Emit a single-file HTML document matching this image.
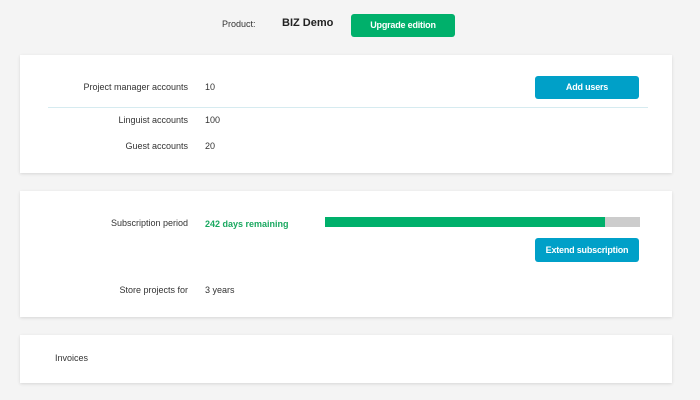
<!DOCTYPE html>
<html><head><style>
body{margin:0;width:700px;height:400px;background:#f4f4f4;font-family:"Liberation Sans",sans-serif;font-size:9px;color:#333;position:relative;overflow:hidden}
.a{position:absolute;white-space:nowrap}
.card{position:absolute;left:20px;width:652px;background:#fff;box-shadow:0 1px 3px rgba(0,0,0,.12)}
.btn{position:absolute;border-radius:3px;color:#fff;text-align:center;font-size:9px;font-weight:bold;letter-spacing:-0.2px}
.lbl{position:absolute;right:512px;white-space:nowrap;text-align:right}
.v{position:absolute;left:205px}
</style></head><body>
<div class="a" style="left:222px;top:19px">Product:</div>
<div class="a" style="left:282px;top:17px;font-size:11px;font-weight:bold;color:#222">BIZ Demo</div>
<div class="btn" style="left:351px;top:14px;width:104px;height:23px;line-height:23px;background:#00b06b">Upgrade edition</div>

<div class="card" style="top:55px;height:118px">
<div class="a" style="right:484px;top:27px">Project manager accounts</div>
<div class="a" style="left:185px;top:27px">10</div>
<div class="btn" style="left:515px;top:21px;width:104px;height:23px;line-height:23px;background:#00a0c8">Add users</div>
<div class="a" style="left:28px;top:52px;width:600px;height:1px;background:#d6ebf0"></div>
<div class="a" style="right:484px;top:60px">Linguist accounts</div>
<div class="a" style="left:185px;top:60px">100</div>
<div class="a" style="right:484px;top:86px">Guest accounts</div>
<div class="a" style="left:185px;top:86px">20</div>
</div>

<div class="card" style="top:191px;height:126px">
<div class="a" style="right:484px;top:27px">Subscription period</div>
<div class="a" style="left:185px;top:28px;color:#1aa860;font-weight:bold">242 days remaining</div>
<div class="a" style="left:305px;top:26px;width:315px;height:10px;background:#cccccc"><div style="width:280px;height:10px;background:#00b06b"></div></div>
<div class="btn" style="left:515px;top:47px;width:104px;height:24px;line-height:24px;background:#00a0c8">Extend subscription</div>
<div class="a" style="right:484px;top:94px">Store projects for</div>
<div class="a" style="left:185px;top:94px">3 years</div>
</div>

<div class="card" style="top:335px;height:48px">
<div class="a" style="left:35px;top:18px">Invoices</div>
</div>
</body></html>
